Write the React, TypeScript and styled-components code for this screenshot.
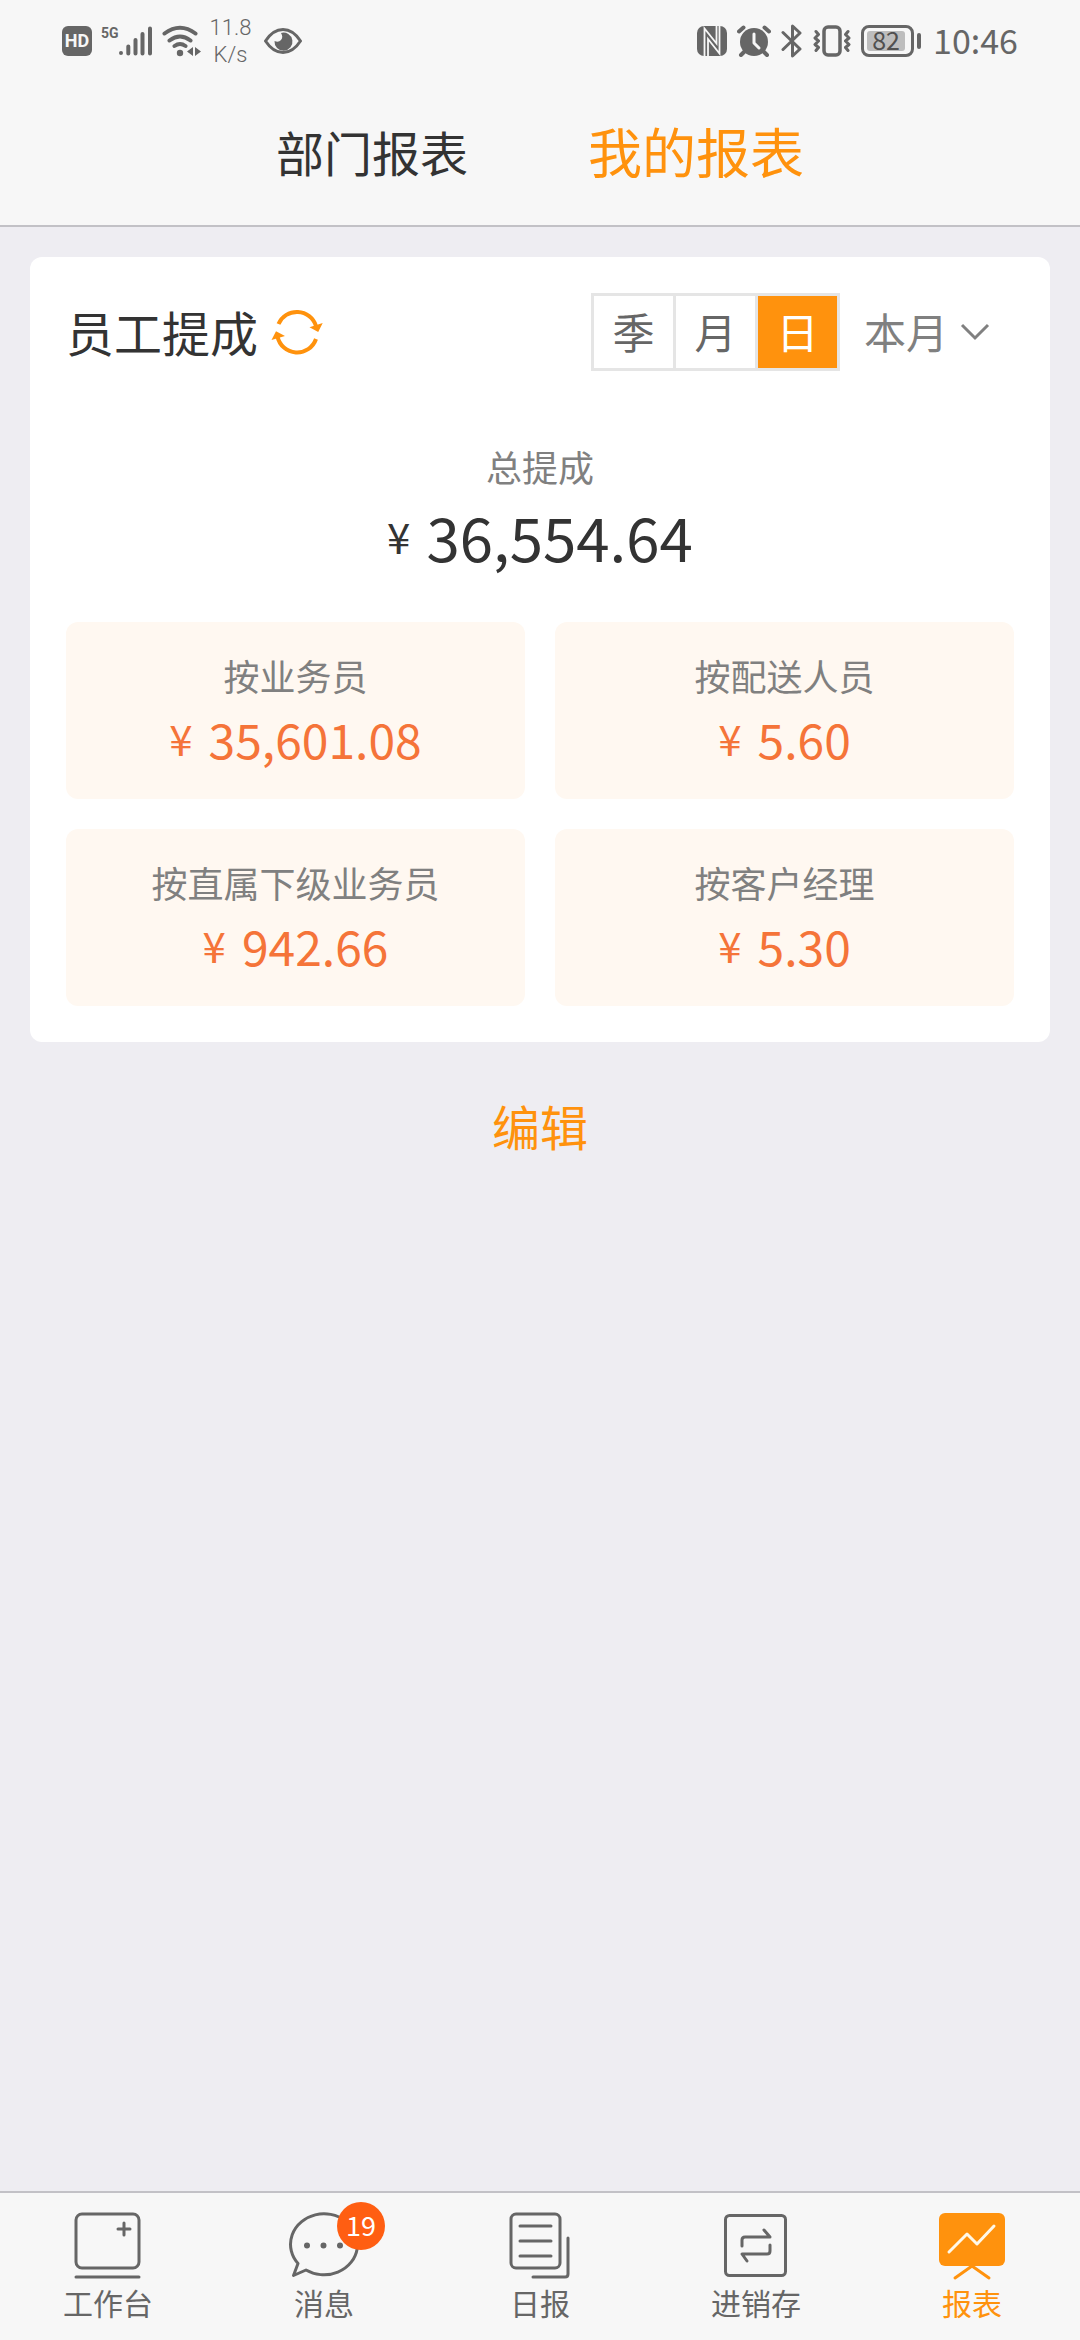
import React, { useState } from "react";
import styled, { createGlobalStyle } from "styled-components";

const color = {
  bar: "#f7f7f7",
  page: "#eeedf2",
  line: "#c2c1c6",
  text: "#333333",
  icon: "#666666",
  muted: "#808080",
  accent: "#ff920d",
  amount: "#f57439",
  tile: "#fff8f1",
  badge: "#ff5e12",
};

const GlobalStyle = createGlobalStyle`
  * { box-sizing: border-box; }
  body {
    margin: 0;
    background: ${color.page};
    font-family: "Noto Sans CJK SC", "Noto Sans", sans-serif;
    color: ${color.text};
  }
  button, select { font: inherit; color: inherit; margin: 0; padding: 0; border: 0; background: none; cursor: pointer; }
  svg { display: block; flex: none; }
`;

const Screen = styled.div`
  min-height: 100vh;
  display: flex;
  flex-direction: column;
`;

/* Status bar */
const StatusBar = styled.div`
  height: 80px;
  padding: 2px 62px 0;
  display: flex;
  align-items: center;
  justify-content: space-between;
  background: ${color.bar};
  color: ${color.icon};
`;

const StatusGroup = styled.div<{ $gap: number }>`
  display: flex;
  align-items: center;
  gap: ${(p) => p.$gap}px;
`;

const HdMark = styled.span`
  width: 30px;
  height: 30px;
  border-radius: 6px;
  background: ${color.icon};
  color: ${color.bar};
  font: 700 18px/30px Roboto, sans-serif;
  text-align: center;
`;

const Signal = styled.span`
  display: flex;
  align-items: flex-start;
`;

const Network = styled.span`
  font: 700 14px/16px Roboto, sans-serif;
`;

const Speed = styled.span`
  padding-right: 4px;
  font: 300 22px/27px Roboto, sans-serif;
  text-align: center;
`;

const Battery = styled.span`
  display: flex;
  align-items: center;
  gap: 3px;
  &::after {
    content: "";
    width: 4px;
    height: 16px;
    border-radius: 2px;
    background: ${color.icon};
  }
`;

const BatteryBody = styled.span`
  width: 53px;
  height: 32px;
  padding: 3px;
  border: 3px solid ${color.icon};
  border-radius: 8px;
`;

const BatteryLevel = styled.span`
  display: block;
  width: 38px;
  height: 20px;
  border-radius: 3px;
  background: #bdbdbd;
  color: #505050;
  font-size: 25px;
  line-height: 17px;
  text-align: center;
`;

const Clock = styled.time`
  padding-bottom: 2px;
  margin-left: 2px;
  font-size: 34px;
  line-height: 40px;
`;

/* Report tabs */
const Tabs = styled.nav`
  height: 147px;
  padding-bottom: 3px;
  display: flex;
  align-items: center;
  justify-content: center;
  gap: 120px;
  background: ${color.bar};
  border-bottom: 2px solid ${color.line};
`;

const Tab = styled.button<{ $active?: boolean }>`
  font-size: ${(p) => (p.$active ? 54 : 48)}px;
  line-height: 80px;
  color: ${(p) => (p.$active ? color.accent : color.text)};
`;

/* Commission card */
const Main = styled.main`
  flex: 1;
  padding: 30px;
  display: flex;
  flex-direction: column;
`;

const Card = styled.section`
  padding: 36px;
  border-radius: 12px;
  background: #ffffff;
`;

const CardHead = styled.header`
  padding-right: 24px;
  display: flex;
  align-items: center;
  gap: 12px;
`;

const Title = styled.h1`
  margin: 0;
  padding-bottom: 3px;
  font-size: 48px;
  font-weight: 400;
  line-height: 72px;
`;

const Filters = styled.div`
  margin-left: auto;
  display: flex;
  align-items: center;
  gap: 24px;
`;

const Segments = styled.div`
  display: flex;
  gap: 3px;
  padding: 3px;
  background: #e5e5e5;
`;

const Segment = styled.button<{ $active: boolean }>`
  width: 79px;
  height: 72px;
  padding-bottom: 2px;
  font-size: 42px;
  line-height: 70px;
  background: ${(p) => (p.$active ? color.accent : "#ffffff")};
  color: ${(p) => (p.$active ? "#ffffff" : color.icon)};
`;

const Period = styled.div`
  display: grid;
  align-items: center;
  color: ${color.muted};
  > * { grid-area: 1 / 1; }
  > svg { justify-self: end; pointer-events: none; }
`;

const PeriodSelect = styled.select`
  appearance: none;
  padding: 0 41px 2px 0;
  font-size: 42px;
  line-height: 70px;
`;

const Total = styled.div`
  padding: 70px 0 41px;
  display: flex;
  flex-direction: column;
  align-items: center;
`;

const Label = styled.span`
  font-size: 36px;
  line-height: 50px;
  color: ${color.muted};
`;

const Money = styled.span<{ $large?: boolean }>`
  display: flex;
  align-items: center;
  gap: 16px;
  font-size: ${(p) => (p.$large ? 60 : 48)}px;
  line-height: ${(p) => (p.$large ? 90 : 70)}px;
  color: ${(p) => (p.$large ? color.text : color.amount)};
`;

const Currency = styled.span`
  font-size: 42px;
`;

const Tiles = styled.div`
  display: grid;
  grid-template-columns: 1fr 1fr;
  gap: 30px;
`;

const Tile = styled.div`
  height: 177px;
  padding-top: 28px;
  display: flex;
  flex-direction: column;
  align-items: center;
  gap: 3px;
  border-radius: 12px;
  background: ${color.tile};
`;

const EditButton = styled.button`
  align-self: center;
  margin-top: 48px;
  font-size: 48px;
  line-height: 70px;
  color: ${color.accent};
`;

/* Bottom navigation */
const BottomNav = styled.nav`
  position: sticky;
  bottom: 0;
  display: flex;
  padding: 17px 0 18px;
  border-top: 2px solid ${color.line};
  background: ${color.bar};
`;

const NavItem = styled.a<{ $active?: boolean }>`
  flex: 1;
  display: flex;
  flex-direction: column;
  align-items: center;
  font-size: 30px;
  line-height: 40px;
  text-decoration: none;
  color: ${(p) => (p.$active ? color.accent : color.icon)};
`;

const IconBox = styled.span`
  position: relative;
`;

const Badge = styled.span`
  position: absolute;
  top: -8px;
  right: -25px;
  width: 48px;
  height: 48px;
  border-radius: 24px;
  background: ${color.badge};
  color: #ffffff;
  font-size: 27px;
  line-height: 46px;
  text-align: center;
`;

const line = {
  fill: "none",
  stroke: "currentColor",
  strokeWidth: 3,
  strokeLinecap: "round" as const,
  strokeLinejoin: "round" as const,
};

const SignalIcon = () => (
  <svg width="34" height="32" viewBox="0 0 34 32" {...line} strokeWidth="4">
    <path d="M2 28v0M9.300 21.500v7M16.500 15v13.500M23.500 9v19.500M31 3.500v25" />
  </svg>
);

const WifiIcon = () => (
  <svg width="39" height="32" viewBox="0 0 39 32" {...line} strokeWidth="4">
    <path d="M2.500 8.500Q18 -3 33.500 8.500M7.500 15.500Q18 7.500 28.500 15.500M12.500 21Q18 17 23.500 21" />
    <circle cx="18" cy="28" r="3.200" fill="currentColor" stroke="none" />
    <path d="M31 22v9l-6-4.500zM33 22v9l6-4.500z" fill="currentColor" stroke="none" />
  </svg>
);

const EyeIcon = () => (
  <svg width="38" height="26" viewBox="0 0 38 26">
    <path d="M1.500 13Q9 1.500 19 1.500T36.500 13Q29 24.500 19 24.500T1.500 13z" {...line} />
    <path d="M17 5a9 9 0 1 1-6.500 8q4 2 6.500-1t0-7z" fill="currentColor" />
  </svg>
);

const NfcIcon = () => (
  <svg width="30" height="30" viewBox="0 0 30 30">
    <rect width="30" height="30" rx="7" fill="currentColor" />
    <path d="M7.500 30V2.500L19.500 17.500V0M22.500 0v27.500L11 13v17" fill="none" stroke={color.bar} strokeWidth="1.800" />
  </svg>
);

const AlarmIcon = () => (
  <svg width="34" height="32" viewBox="0 0 34 32">
    <circle cx="17" cy="17" r="14" fill="currentColor" />
    <path d="M2 6.500l4.500-4M32 6.500l-4.500-4M7 27l-3 3M27 27l3 3" {...line} strokeWidth="4" />
    <path d="M17 9v9l5 5" {...line} stroke={color.bar} />
  </svg>
);

const BluetoothIcon = () => (
  <svg width="22" height="34" viewBox="0 0 22 34" {...line}>
    <path d="M2 8.500L19 25l-7.500 7V2L19 9 2 25.500" />
  </svg>
);

const VibrateIcon = () => (
  <svg width="38" height="32" viewBox="0 0 38 32" {...line}>
    <rect x="11" y="2" width="16" height="28" rx="4" strokeWidth="3.500" />
    <path d="M3 6.500l2.500 3L2 13l3.500 3L2 19.500l3.500 3L3 25.500M35 6.500l-2.500 3L36 13l-3.500 3 3.500 3.500-3.500 3 2.500 3" />
  </svg>
);

const RefreshIcon = () => (
  <svg width="54" height="48" viewBox="0 0 54 48">
    <path d="M8.500 16A20 20 0 0 1 46 18M46 31A20 20 0 0 1 7.500 28.500" fill="none" stroke={color.accent} strokeWidth="4" />
    <path d="M39.500 19.300l13.200-4.300-4.500 9zM6 23.300l-4.500 8.700 13.500-4z" fill={color.accent} />
  </svg>
);

const ChevronIcon = () => (
  <svg width="30" height="20" viewBox="0 0 30 20">
    <path d="M2 3l13 13L28 3" fill="none" stroke="currentColor" strokeWidth="3" />
  </svg>
);

const navIcon = { width: 72, height: 72, viewBox: "0 0 72 72", ...line };

const WorkbenchIcon = () => (
  <svg {...navIcon}>
    <rect x="4" y="4" width="63" height="54" rx="6" />
    <path d="M4 67h63M46 19h12M52 13v12" />
  </svg>
);

const MessageIcon = () => (
  <svg {...navIcon}>
    <path d="M10 53.500A33.500 30.500 0 1 1 18 60L5.500 65.500z" />
    <path d="M19 35.500v0M35.500 35.500v0M52 35.500v0" strokeWidth="6" />
  </svg>
);

const DailyIcon = () => (
  <svg {...navIcon}>
    <rect x="7" y="4" width="49" height="54" rx="5" />
    <path d="M16 16h31M16 31h31M16 46h31M64 28v36q0 3-3 3H29" />
  </svg>
);

const StockIcon = () => (
  <svg {...navIcon}>
    <rect x="5.500" y="5.500" width="60" height="60" rx="4" />
    <path d="M22 36v-6q0-3 3-3h25l-6-7M50 35v6q0 3-3 3H22l5 7" />
  </svg>
);

const ReportIcon = () => (
  <svg {...navIcon}>
    <rect x="3" y="3" width="66" height="53" rx="6" fill="currentColor" stroke="none" />
    <path d="M19 68l17-12 17 12" />
    <path d="M13 42l18-18 10 10 17-18" stroke="#fff8e8" />
  </svg>
);

const tiles = [
  { label: "按业务员", value: "35,601.08" },
  { label: "按配送人员", value: "5.60" },
  { label: "按直属下级业务员", value: "942.66" },
  { label: "按客户经理", value: "5.30" },
];

const navItems = [
  { label: "工作台", Icon: WorkbenchIcon },
  { label: "消息", Icon: MessageIcon, badge: 19 },
  { label: "日报", Icon: DailyIcon },
  { label: "进销存", Icon: StockIcon },
  { label: "报表", Icon: ReportIcon, active: true },
];

const Amount = ({ value, large }: { value: string; large?: boolean }) => (
  <Money $large={large}>
    <Currency>¥</Currency>
    <span>{value}</span>
  </Money>
);

export default function App() {
  const [unit, setUnit] = useState("日");
  return (
    <>
      <GlobalStyle />
      <Screen>
        <StatusBar>
          <StatusGroup $gap={9}>
            <HdMark>HD</HdMark>
            <Signal>
              <Network>5G</Network>
              <SignalIcon />
            </Signal>
            <WifiIcon />
            <Speed>
              11.8
              <br />
              K/s
            </Speed>
            <EyeIcon />
          </StatusGroup>
          <StatusGroup $gap={10}>
            <NfcIcon />
            <AlarmIcon />
            <BluetoothIcon />
            <VibrateIcon />
            <Battery>
              <BatteryBody>
                <BatteryLevel>82</BatteryLevel>
              </BatteryBody>
            </Battery>
            <Clock>10:46</Clock>
          </StatusGroup>
        </StatusBar>

        <Tabs>
          <Tab type="button">部门报表</Tab>
          <Tab type="button" $active>
            我的报表
          </Tab>
        </Tabs>

        <Main>
          <Card>
            <CardHead>
              <Title>员工提成</Title>
              <button type="button" aria-label="刷新">
                <RefreshIcon />
              </button>
              <Filters>
                <Segments>
                  {["季", "月", "日"].map((name) => (
                    <Segment
                      key={name}
                      type="button"
                      $active={unit === name}
                      aria-pressed={unit === name}
                      onClick={() => setUnit(name)}
                    >
                      {name}
                    </Segment>
                  ))}
                </Segments>
                <Period>
                  <PeriodSelect aria-label="时间范围" defaultValue="本月">
                    <option>本月</option>
                    <option>上月</option>
                  </PeriodSelect>
                  <ChevronIcon />
                </Period>
              </Filters>
            </CardHead>

            <Total>
              <Label>总提成</Label>
              <Amount value="36,554.64" large />
            </Total>

            <Tiles>
              {tiles.map((tile) => (
                <Tile key={tile.label}>
                  <Label>{tile.label}</Label>
                  <Amount value={tile.value} />
                </Tile>
              ))}
            </Tiles>
          </Card>
          <EditButton type="button">编辑</EditButton>
        </Main>

        <BottomNav>
          {navItems.map(({ label, Icon, badge, active }) => (
            <NavItem key={label} href="#" $active={active} aria-current={active ? "page" : undefined}>
              <IconBox>
                <Icon />
                {badge && <Badge>{badge}</Badge>}
              </IconBox>
              {label}
            </NavItem>
          ))}
        </BottomNav>
      </Screen>
    </>
  );
}
